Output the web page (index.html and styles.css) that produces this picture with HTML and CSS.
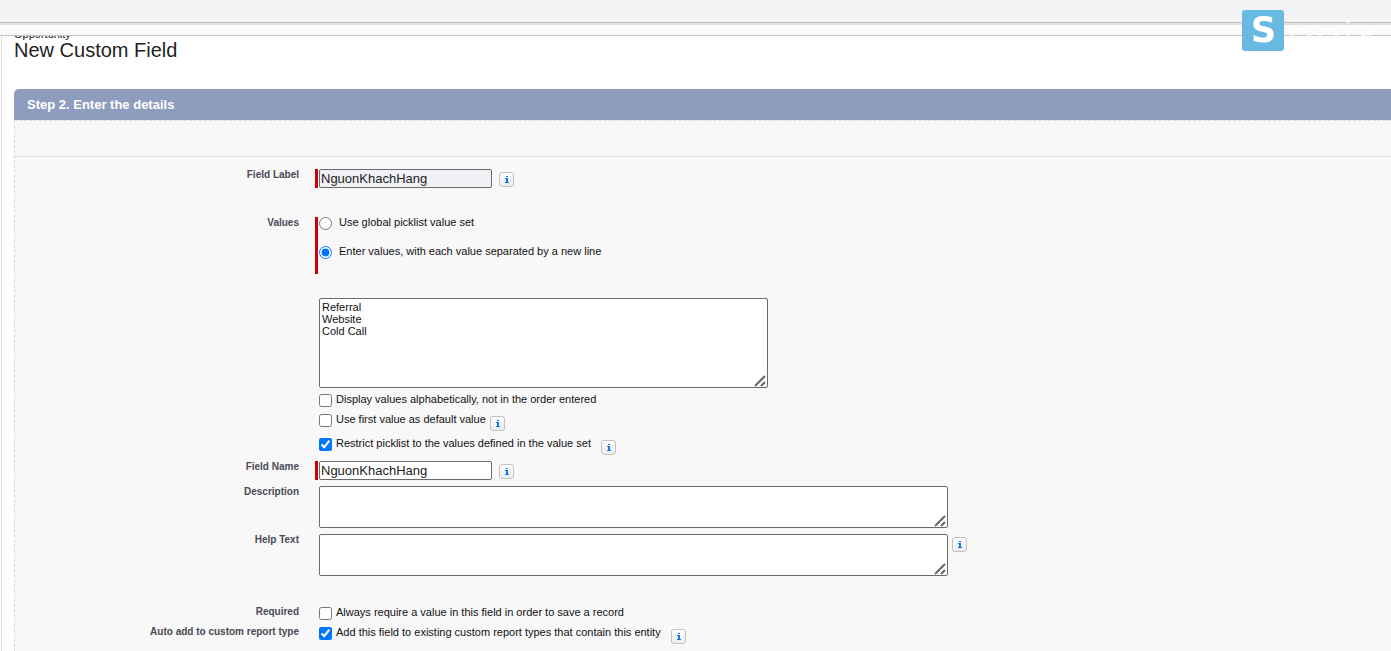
FILE: index.html
```html
<!DOCTYPE html>
<html lang="en">
<head>
    <meta charset="UTF-8">
    <meta name="viewport" content="width=device-width, initial-scale=1.0">
    <title>New Custom Field</title>
    <link rel="stylesheet" href="styles.css">
</head>
<body>

    <svg class="sprite" aria-hidden="true">
        <symbol id="info" viewBox="0 0 15 15">
            <path d="M7 4h2v1H7zM6 6h3v4h1v1H6v-1h1V7H6z" fill="#0a78e8"/>
        </symbol>
        <symbol id="grip" viewBox="0 0 12 12">
            <path d="M1 11L11 1M7 11l4-4" stroke="#666" stroke-width="2" fill="none"/>
        </symbol>
    </svg>

    <div class="toolbar"></div>
    <div class="subbar"></div>

    <!-- Logo -->
    <div class="logo">
        <span class="logo-mark">S</span>
        <span class="logo-name">onix</span>
    </div>

    <main class="page">
        <header class="page-title">
            <p class="object-name">Opportunity</p>
            <h1>New Custom Field</h1>
        </header>

        <section class="panel">
            <h2 class="panel-head">Step 2. Enter the details</h2>

            <form class="panel-body">
                <div class="button-strip"></div>

                <div class="row row-first">
                    <label class="row-label" for="fieldLabel">Field Label</label>
                    <div class="control required input-line">
                        <input class="text-input filled" type="text" id="fieldLabel" value="NguonKhachHang">
                        <button class="info" type="button" aria-label="Info"><svg><use href="#info"/></svg></button>
                    </div>
                </div>

                <!-- Picklist values -->
                <div class="row row-values">
                    <span class="row-label">Values</span>
                    <div class="control required radios">
                        <label class="radio"><input type="radio" name="source"> Use global picklist value set</label>
                        <label class="radio"><input type="radio" name="source" checked> Enter values, with each value separated by a new line</label>
                    </div>
                </div>

                <div class="row row-picklist">
                    <span class="row-label"></span>
                    <div class="control">
                        <div class="area area-values">
                            <textarea aria-label="Picklist values">Referral
Website
Cold Call</textarea>
                            <svg class="grip"><use href="#grip"/></svg>
                        </div>
                        <div class="checks">
                            <div class="check-line">
                                <label><input type="checkbox"> Display values alphabetically, not in the order entered</label>
                            </div>
                            <div class="check-line">
                                <label><input type="checkbox"> Use first value as default value</label>
                                <button class="info" type="button" aria-label="Info"><svg><use href="#info"/></svg></button>
                            </div>
                            <div class="check-line spaced">
                                <label><input type="checkbox" checked> Restrict picklist to the values defined in the value set</label>
                                <button class="info" type="button" aria-label="Info"><svg><use href="#info"/></svg></button>
                            </div>
                        </div>
                    </div>
                </div>

                <div class="row">
                    <label class="row-label" for="fieldName">Field Name</label>
                    <div class="control required input-line">
                        <input class="text-input" type="text" id="fieldName" value="NguonKhachHang">
                        <button class="info" type="button" aria-label="Info"><svg><use href="#info"/></svg></button>
                    </div>
                </div>

                <div class="row row-area">
                    <label class="row-label" for="description">Description</label>
                    <div class="control area-line">
                        <div class="area">
                            <textarea id="description"></textarea>
                            <svg class="grip"><use href="#grip"/></svg>
                        </div>
                    </div>
                </div>

                <div class="row row-area">
                    <label class="row-label" for="helpText">Help Text</label>
                    <div class="control area-line">
                        <div class="area">
                            <textarea id="helpText"></textarea>
                            <svg class="grip"><use href="#grip"/></svg>
                        </div>
                        <button class="info" type="button" aria-label="Info"><svg><use href="#info"/></svg></button>
                    </div>
                </div>

                <div class="row row-options">
                    <label class="row-label" for="required">Required</label>
                    <div class="control check-line">
                        <label><input type="checkbox" id="required"> Always require a value in this field in order to save a record</label>
                    </div>
                </div>

                <div class="row">
                    <label class="row-label" for="autoAdd">Auto add to custom report type</label>
                    <div class="control check-line spaced">
                        <label><input type="checkbox" id="autoAdd" checked> Add this field to existing custom report types that contain this entity</label>
                        <button class="info" type="button" aria-label="Info"><svg><use href="#info"/></svg></button>
                    </div>
                </div>
            </form>
        </section>
    </main>

</body>
</html>
```
FILE: styles.css
```css
* {
    box-sizing: border-box;
}

body {
    margin: 0;
    background-color: #fff;
    color: #111;
    font-family: "Liberation Sans", Arial, sans-serif;
    font-size: 11px;
    overflow: hidden;
}

.sprite {
    display: none;
}

/* Top bars */
.toolbar {
    height: 25px;
    background-color: #f1f3f5;
    border-bottom: 2px solid #e2e2e2;
    box-shadow: inset 0 -1px 0 #bfbfbf;
}

.subbar {
    height: 11px;
    background-color: #fafafa;
    border-bottom: 1px solid #c4c4c4;
}

/* Logo, lies over the bars */
.logo {
    position: absolute;
    top: 10px;
    right: 13px;
    display: flex;
    align-items: flex-start;
    gap: 2px;
    color: #fff;
}

.logo-mark {
    width: 42px;
    height: 41px;
    border-radius: 3px;
    background-color: #69bae0;
    font: bold 35px/41px "DejaVu Sans", sans-serif;
    text-align: center;
}

.logo-name {
    font: 46px/48px "Open Sans", sans-serif;
    opacity: 0.7;
}

.page {
    margin-left: 1px;
    padding-left: 12px;
    border-left: 1px solid #e0e0e0;
}

.page-title {
    height: 53px;
    overflow: hidden;
}

.object-name {
    margin: -8px 0 0;
    line-height: 12px;
}

h1 {
    margin: 0;
    color: #222;
    font-size: 20px;
    font-weight: normal;
    line-height: 20px;
}

/* Panel */
.panel-head {
    margin: 0;
    padding-left: 13px;
    border-radius: 5px 0 0 0;
    background-color: #8e9dbe;
    color: #fff;
    font-size: 13px;
    line-height: 31px;
}

.panel-body {
    padding-bottom: 20px;
    background-color: #f8f8f8;
    border-top: 1px dashed #ddd;
    border-left: 1px dashed #ddd;
}

.button-strip {
    height: 36px;
    border-bottom: 1px solid #e2e2e2;
}

.row {
    display: grid;
    grid-template-columns: 284px 1fr;
    column-gap: 16px;
}

.row-first {
    margin: 12px 0 29px;
}

.row-picklist {
    margin-top: 24px;
}

.row-area {
    margin-top: 6px;
}

.row-options {
    margin-top: 27px;
}

.row-label {
    color: #4a4a56;
    font-size: 10px;
    font-weight: bold;
    line-height: 12px;
    text-align: right;
}

.row-options .row-label,
.row-options + .row .row-label {
    padding-top: 3px;
}

.control {
    padding-left: 1px;
    border-left: 3px solid transparent;
}

.required {
    border-left-color: #c00;
}

.input-line {
    display: flex;
    gap: 7px;
}

.input-line .info {
    margin-top: 3px;
}

.text-input {
    width: 173px;
    height: 19px;
    padding: 0 1px;
    border: 1px solid #6b6b6b;
    border-radius: 2px;
    background-color: #fff;
    color: #222;
    font: 13px "Liberation Sans", Arial, sans-serif;
}

.filled {
    background-color: #f0f1f5;
}

.info {
    flex: none;
    width: 15px;
    height: 15px;
    padding: 0;
    border: 1px solid #c2c2c2;
    border-radius: 3px;
    background: linear-gradient(#fff, #ececf0);
}

.info svg {
    display: block;
    width: 15px;
    height: 15px;
    margin: -1px;
}

input[type="checkbox"],
input[type="radio"] {
    flex: none;
    width: 13px;
    height: 13px;
    margin: 0;
}

.radios {
    height: 57px;
}

.radio {
    display: flex;
    gap: 7px;
    height: 29px;
    line-height: 11px;
}

/* Text areas */
.area {
    position: relative;
    width: 100%;
    max-width: 629px;
    height: 42px;
}

.area-values {
    max-width: 449px;
    height: 90px;
}

.area textarea {
    display: block;
    width: 100%;
    height: 100%;
    padding: 2px;
    border: 1px solid #6b6b6b;
    border-radius: 2px;
    background-color: #fff;
    color: #111;
    font: 11px/12px "Liberation Sans", Arial, sans-serif;
    resize: none;
}

.grip {
    position: absolute;
    right: 2px;
    bottom: 1px;
    width: 12px;
    height: 12px;
}

.area-line {
    display: flex;
    gap: 4px;
}

.area-line .info {
    margin-top: 3px;
}

/* Checkboxes */
.checks {
    padding: 2px 0 3px;
}

.check-line {
    display: flex;
    gap: 4px;
    line-height: 19px;
}

.check-line label {
    display: flex;
    gap: 4px;
    min-height: 20px;
}

.check-line input {
    margin-top: 4px;
}

.check-line .info {
    margin: 6px 0 3px;
}

.spaced {
    gap: 10px;
}
```
